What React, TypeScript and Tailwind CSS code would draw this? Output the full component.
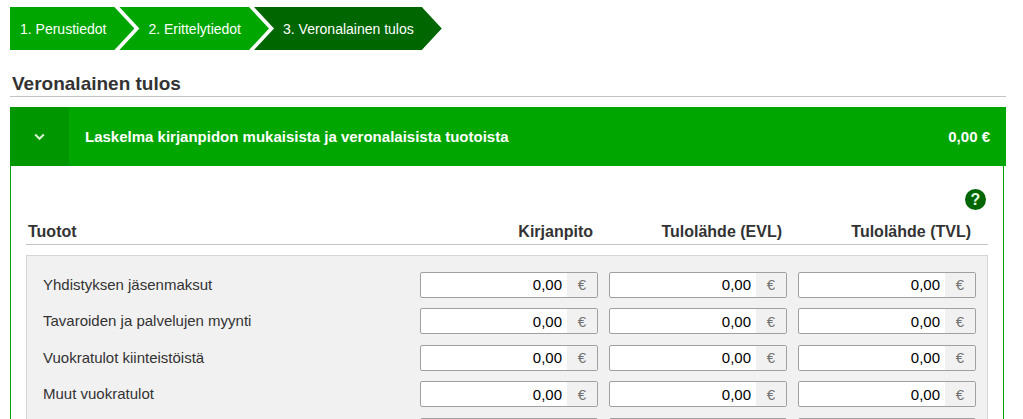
import React, { useState } from 'react';
import clsx from 'clsx';

const steps = ['1. Perustiedot', '2. Erittelytiedot', '3. Veronalainen tulos'];

const columns = ['Kirjanpito', 'Tulolähde (EVL)', 'Tulolähde (TVL)'];

const incomeRows = [
  'Yhdistyksen jäsenmaksut',
  'Tavaroiden ja palvelujen myynti',
  'Vuokratulot kiinteistöistä',
  'Muut vuokratulot',
  '',
];

function StepNav({ active }: { active: number }) {
  return (
    <nav className="flex">
      {steps.map((step, i) => (
        <a
          key={step}
          href="#"
          aria-current={i === active ? 'step' : undefined}
          className={clsx(
            'flex h-[43px] items-center pr-[28px] text-sm text-white',
            i === active ? 'bg-[#006600]' : 'bg-[#00a600]',
            i === 0
              ? 'pl-[10px] [clip-path:polygon(0_0,calc(100%-20px)_0,100%_50%,calc(100%-20px)_100%,0_100%)]'
              : '-ml-[15px] pl-[29px] [clip-path:polygon(0_0,calc(100%-20px)_0,100%_50%,calc(100%-20px)_100%,0_100%,20px_50%)]'
          )}
        >
          {step}
        </a>
      ))}
    </nav>
  );
}

function EuroInput({ label, initial, unit }: { label: string; initial: string; unit: string }) {
  const [value, setValue] = useState(initial);

  return (
    <div className="flex h-[26px] w-[178px] overflow-hidden rounded-xs border border-[#a0a0a0] bg-white">
      <input
        type="text"
        aria-label={label}
        value={value}
        onChange={(e) => setValue(e.target.value)}
        className="min-w-0 flex-1 pt-[2px] pr-[5px] text-right text-[15px] text-black outline-none"
      />
      <span className="flex w-[30px] items-center justify-center bg-[#f1f1f1] pt-[2px] text-[15px] text-[#707070]">
        {unit}
      </span>
    </div>
  );
}

export default function App() {
  const [open, setOpen] = useState(true);

  return (
    <div className="h-screen overflow-hidden bg-white pt-[7px] pr-[17px] pl-[10px] font-['Liberation_Sans',Arial,sans-serif] text-[#333]">
      <StepNav active={2} />

      <h1 className="mt-[21px] border-b border-[#c4c4c4] pl-[2px] text-[19px] leading-[25px] font-bold">
        Veronalainen tulos
      </h1>

      <section className="mt-[10px]">
        <div className="flex h-[59px] items-center bg-[#00a600] font-bold text-white">
          <button
            type="button"
            aria-label="Laskelma"
            aria-expanded={open}
            onClick={() => setOpen(!open)}
            className="flex h-full w-[59px] items-center justify-center bg-[#009600]"
          >
            <svg width="12" height="8" viewBox="0 0 12 8" fill="none" stroke="#d9f5d2" strokeWidth="2">
              <path d="M1.2 1.5 5.5 5.8l4.3-4.3" />
            </svg>
          </button>
          <h2 className="flex-1 pt-px pl-4 text-[15px]">Laskelma kirjanpidon mukaisista ja veronalaisista tuotoista</h2>
          <span className="pt-px pr-4 text-[15px]">0,00 €</span>
        </div>

        {open && (
          <div className="mr-[2px] border-x border-[#00a600] px-[15px] pt-[23px]">
            <div className="flex justify-end pr-[2px]">
              <button
                type="button"
                className="flex size-[21px] items-center justify-center rounded-full bg-[#006600] text-base font-bold text-[#e4ffe0]"
              >
                ?
              </button>
            </div>

            <table className="mt-[9px] w-full border-separate border-spacing-0">
              <thead>
                <tr className="h-[26px] text-base leading-[25px]">
                  <th className="border-b border-[#c4c4c4] pl-[2px] text-left">Tuotot</th>
                  {columns.map((col) => (
                    <th
                      key={col}
                      className="w-[189px] border-b border-[#c4c4c4] pr-4 text-right last:w-[190px] last:pr-[17px]"
                    >
                      {col}
                    </th>
                  ))}
                </tr>
                <tr className="h-[10px]">
                  <td colSpan={4} />
                </tr>
              </thead>
              <tbody className="bg-[#f1f1f1]">
                <tr className="h-[11px]">
                  <td colSpan={4} className="border border-b-0 border-[#d6d6d6]" />
                </tr>
                {incomeRows.map((row, i) => (
                  <tr key={i} className="odd:h-9 even:h-[37px]">
                    <th
                      scope="row"
                      className="border-l border-[#d6d6d6] p-0 pl-4 text-left text-[15px] leading-5 font-normal"
                    >
                      {row}
                    </th>
                    {columns.map((col) => (
                      <td key={col} className="p-0 last:border-r last:border-[#d6d6d6]">
                        <EuroInput label={`${row} ${col}`.trim()} initial={row && '0,00'} unit={row && '€'} />
                      </td>
                    ))}
                  </tr>
                ))}
              </tbody>
            </table>
          </div>
        )}
      </section>
    </div>
  );
}
